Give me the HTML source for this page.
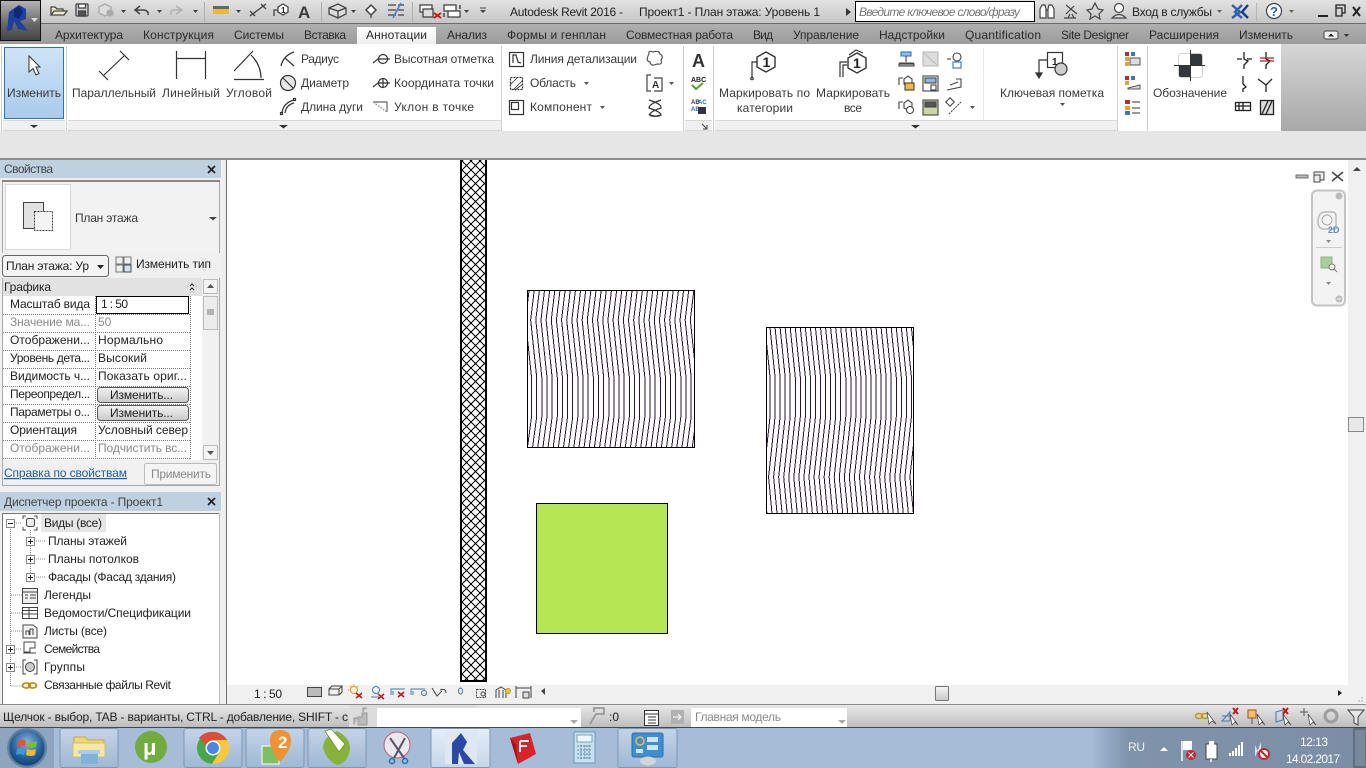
<!DOCTYPE html>
<html lang="ru"><head><meta charset="utf-8"><title>Autodesk Revit 2016</title>
<style>
html,body{margin:0;padding:0;width:1366px;height:768px;overflow:hidden;background:#e6e6e6}
svg{display:block;position:absolute;left:0;top:0}
text{font-family:"Liberation Sans","Noto Sans CJK JP",sans-serif;font-size:12px;fill:#222}
.g{fill:#8a8a8a}.t{fill:#2a2a2a}.s{fill:#3a3a3a}
</style></head><body>
<svg width="1366" height="768" viewBox="0 0 1366 768" xmlns="http://www.w3.org/2000/svg">
<defs>
<linearGradient id="tb" x1="0" y1="0" x2="0" y2="1"><stop offset="0" stop-color="#e2e2e2"/><stop offset="1" stop-color="#c6c6c6"/></linearGradient>
<linearGradient id="tab" x1="0" y1="0" x2="0" y2="1"><stop offset="0" stop-color="#b0b0b0"/><stop offset="1" stop-color="#9c9c9c"/></linearGradient>
<linearGradient id="atab" x1="0" y1="0" x2="0" y2="1"><stop offset="0" stop-color="#fff"/><stop offset="1" stop-color="#eee"/></linearGradient>
<linearGradient id="sel" x1="0" y1="0" x2="0" y2="1"><stop offset="0" stop-color="#cfe3f5"/><stop offset="1" stop-color="#a9cbec"/></linearGradient>
<linearGradient id="rb" x1="0" y1="0" x2="0" y2="1"><stop offset="0" stop-color="#b5b5b5"/><stop offset=".6" stop-color="#666"/><stop offset="1" stop-color="#444"/></linearGradient>
<linearGradient id="fill" x1="0" y1="0" x2="0" y2="1"><stop offset="0" stop-color="#d6d6d6"/><stop offset="1" stop-color="#a8a8a8"/></linearGradient>
<linearGradient id="st" x1="0" y1="0" x2="0" y2="1"><stop offset="0" stop-color="#e8e8e8"/><stop offset="1" stop-color="#bdbdbd"/></linearGradient>
<linearGradient id="btn" x1="0" y1="0" x2="0" y2="1"><stop offset="0" stop-color="#f4f4f4"/><stop offset="1" stop-color="#c8c8c8"/></linearGradient>
<linearGradient id="tray" x1="0" y1="0" x2="1" y2="0"><stop offset="0" stop-color="#a6bdd8"/><stop offset=".14" stop-color="#7f93ab"/><stop offset="1" stop-color="#7b8ea6"/></linearGradient>
<linearGradient id="tbtn" x1="0" y1="0" x2="0" y2="1"><stop offset="0" stop-color="#c3d4e7"/><stop offset="1" stop-color="#9fb8d4"/></linearGradient>
<linearGradient id="tact" x1="0" y1="0" x2="0" y2="1"><stop offset="0" stop-color="#e6eef7"/><stop offset="1" stop-color="#c5d6e9"/></linearGradient>
<radialGradient id="orb" cx=".5" cy=".35" r=".7"><stop offset="0" stop-color="#8ab6e2"/><stop offset=".6" stop-color="#23609c"/><stop offset="1" stop-color="#0f3a68"/></radialGradient>
<pattern id="hatch" patternUnits="userSpaceOnUse" width="9" height="9" x="462" y="161"><path d="M0 0L9 9M9 0L0 9" stroke="#000" stroke-width="1" fill="none" shape-rendering="crispEdges"/></pattern>
<clipPath id="c1"><rect x="528" y="291" width="166" height="156"/></clipPath>
<clipPath id="c2"><rect x="767" y="328" width="146" height="185"/></clipPath>
<path id="l1" d="M0 291L-3.500 320L2.500 377L2.500 417L-1.500 447" fill="none" stroke="#2a1230" stroke-width="1" shape-rendering="crispEdges"/>
<path id="l2" d="M0 328L5 377L5 417L-1.500 477L2 514" fill="none" stroke="#2a1230" stroke-width="1" shape-rendering="crispEdges"/>
</defs>

<!-- base -->
<rect width="1366" height="768" fill="#e9e9e9"/>
<!-- title bar -->
<rect width="1366" height="23" fill="url(#tb)"/>
<rect y="23" width="1366" height="1" fill="#6b6b6b"/>
<rect y="24" width="1366" height="20" fill="url(#tab)"/>
<rect x="357" y="27" width="79" height="18" fill="url(#atab)"/>
<!-- ribbon -->
<rect y="44" width="1366" height="87" fill="#fff"/>
<rect x="1281" y="44" width="85" height="87" fill="url(#fill)"/>
<rect y="131" width="1366" height="27" fill="#e6e6e6"/>
<rect y="158" width="1366" height="2" fill="#8e8e8e"/>
<rect x="3" y="120" width="62" height="10" fill="#f0f0f0"/><rect x="68" y="121" width="433" height="9" fill="#f0f0f0"/>
<rect x="685" y="121" width="27" height="9" fill="#f0f0f0"/><rect x="715" y="121" width="402" height="9" fill="#f0f0f0"/>
<path d="M3 120.500H65M68 120.500H501M685 120.500H712M715 120.500H1117" stroke="#d8d8d8"/>
<path d="M3 130.500H65M68 130.500H501M685 130.500H712M715 130.500H1117" stroke="#d8d8d8"/>
<path d="M66.500 46V131M501.500 46V131M683.500 46V131M713.500 46V131M1117.500 46V131M1147.500 46V131M1.500 46V131" stroke="#cfcfcf"/>
<path d="M983.500 48V120" stroke="#e8e8e8"/>
<rect x="4.500" y="47.500" width="59" height="71" fill="url(#sel)" stroke="#2f73ad"/>
<path d="M29 56V72L33 68.500L36 75L39 73.500L36 67H40Z" fill="#fff" stroke="#333"/>
<path d="M30 125L34 128L38 125ZM279 125L283.500 128.500L288 125ZM911 125L915.500 128.500L920 125Z" fill="#333"/>
<path d="M702 124L707 129M707 125V129H703" stroke="#444" fill="none"/>

<!-- R button -->
<rect x=".5" y=".5" width="40" height="40" fill="url(#rb)" stroke="#111"/>
<path d="M9 12L19 5L26 9L26 19L20 21L28 31L18 29L14 21L12 30L7 31Z" fill="#1f3f9c"/>
<path d="M14 9L19 6L23 12L19 19L14 17Z" fill="#0f2a75"/>
<path d="M31 18L38 18L34.500 22Z" fill="#ddd"/>

<!-- QAT -->
<g fill="none" stroke="#444" stroke-width="1.300">
<path d="M51 15V7H55L57 9H63V11M51 15L54 11H67L64 15Z" fill="#f2e9c8"/>
<rect x="76" y="4" width="12" height="12" rx="1" fill="#d0d5db"/><rect x="78.500" y="4" width="7" height="4" fill="#fff"/><rect x="78.500" y="11" width="7" height="5" fill="#555"/>
<path d="M99 7L105 4L111 7V13L105 16L99 13Z" stroke="#aaa" fill="#ddd"/><circle cx="110" cy="13" r="3" fill="#aaa" stroke="#aaa"/>
<path d="M140 6L135 10L140 14M135 10H144Q149 11 148 15" stroke-width="1.500"/>
<path d="M176 6L182 10L176 14M181 10H173Q170 11 171 15" stroke="#b0b0b0" stroke-width="1.500"/>
<path d="M250 16L266 4M250 11L255 16M261 4L266 9" stroke-width="1.300"/>
<path d="M274 16V10H279" /><path d="M283 4L288 7V12L283 15L278 12V7Z" fill="#fff"/>
<path d="M329 8L338 4L346 8V14L338 18L329 14Z" fill="#ddd"/><path d="M329 8L338 11L346 8M338 11V18"/>
<path d="M366 10L371 5L376 10L371 15Z" fill="#fff" stroke-width="1.500"/><path d="M371 15V18"/>
<path d="M388 5H396M388 10H396M388 15H396M398 5H404M398 10H404M398 15H404"/><path d="M393 18L401 3" stroke="#3c7fd0" stroke-width="1.500"/>
<rect x="420" y="5" width="12" height="7" fill="#fff"/><rect x="423" y="9" width="10" height="8" fill="#ddd"/>
<rect x="444" y="5" width="12" height="6" fill="#fff"/><rect x="448" y="11" width="12" height="6" fill="#fff"/><path d="M460 5V9M444 13V17" stroke="#333"/>
</g>
<path d="M434 13L441 18M441 13L434 18" stroke="#c11" stroke-width="1.800"/>
<rect x="213" y="6" width="16" height="3" fill="#666"/><rect x="213" y="9" width="16" height="5" fill="#e9b93f"/>
<text x="298" y="18" style="font-size:17px;font-weight:bold;fill:#3c3c3c">A</text>
<text x="281" y="13" style="font-size:8px;font-weight:bold">1</text>
<path d="M121 10H126L123.500 13ZM157 10H162L159.500 13ZM193 10H198L195.500 13ZM236 10H241L238.500 13ZM351 10H356L353.500 13ZM464 10H469L466.500 13ZM480 10H486L483 13Z" fill="#444"/>
<path d="M480 8H486" stroke="#444"/>
<path d="M204.500 2V22M321.500 2V22M412.500 2V22" stroke="#b0b0b0"/>

<!-- title text -->
<text x="510" y="16" textLength="113">Autodesk Revit 2016 -</text>
<text x="639" y="16" textLength="181">Проект1 - План этажа: Уровень 1</text>
<path d="M846 8L851 12L846 16Z" fill="#333"/>
<rect x="855.500" y="1.500" width="179" height="20" fill="#fff" stroke="#000"/>
<text x="859" y="16" textLength="161" style="font-style:italic;fill:#777">Введите ключевое слово/фразу</text>
<g fill="none" stroke="#444" stroke-width="1.200">
<path d="M1040 18V9L1042 5H1045L1046 9V18ZM1048 18V9L1049 5H1052L1054 9V18ZM1046 10H1048" fill="#fff"/>
<path d="M1066 5L1077 14M1066 14L1074 6M1064 18H1076M1070 14L1068 18M1072 14L1074 18"/>
<path d="M1095 3L1098 9L1103 10L1099 14L1100 19L1095 16L1090 19L1091 14L1087 10L1092 9Z"/>
<circle cx="1119" cy="8" r="4.500" fill="#fff"/><path d="M1112 18Q1119 11 1126 18Z" fill="#dde"/>
</g>
<text x="1132" y="16" textLength="80">Вход в службы</text>
<path d="M1217 10H1222L1219.500 13ZM1289 10H1294L1291.500 13Z" fill="#666"/>
<path d="M1232 5L1240 12L1232 18M1242 5L1235 12L1242 18" stroke="#2c5fb0" stroke-width="2.400" fill="none"/><path d="M1248 5L1242 12L1248 18" stroke="#123a88" stroke-width="2.400" fill="none"/>
<path d="M1256.500 3V21" stroke="#b5b5b5"/>
<circle cx="1274" cy="11" r="7.500" fill="#fff" stroke="#345" stroke-width="1.200"/>
<text x="1270" y="16" style="font-size:13px;font-weight:bold;fill:#2a5fae">?</text>
<rect x="1318" y="15" width="10" height="2" fill="#222"/>
<path d="M1336 8V5H1345V13H1342M1336 8H1342V16H1336Z" fill="none" stroke="#222" stroke-width="1.300"/>
<path d="M1353 7L1360 16M1360 7L1353 16" stroke="#222" stroke-width="2"/>

<!-- tabs -->
<text x="55" y="39" textLength="68" class="t">Архитектура</text>
<text x="143" y="39" textLength="71" class="t">Конструкция</text>
<text x="234" y="39" textLength="50" class="t">Системы</text>
<text x="304" y="39" textLength="42" class="t">Вставка</text>
<text x="366" y="39" textLength="61" class="t">Аннотации</text>
<text x="447" y="39" textLength="40" class="t">Анализ</text>
<text x="507" y="39" textLength="99" class="t">Формы и генплан</text>
<text x="626" y="39" textLength="107" class="t">Совместная работа</text>
<text x="753" y="39" textLength="20" class="t">Вид</text>
<text x="793" y="39" textLength="66" class="t">Управление</text>
<text x="879" y="39" textLength="66" class="t">Надстройки</text>
<text x="965" y="39" textLength="76" class="t">Quantification</text>
<text x="1061" y="39" textLength="68" class="t">Site Designer</text>
<text x="1149" y="39" textLength="70" class="t">Расширения</text>
<text x="1239" y="39" textLength="54" class="t">Изменить</text>
<rect x="1324" y="31" width="14" height="8" rx="2" fill="#eee" stroke="#444"/><path d="M1328 36.500L1331 33.500L1334 36.500Z" fill="#222"/><path d="M1344 34H1349L1346.500 37Z" fill="#333"/>

<!-- ribbon labels -->
<text x="7" y="97" textLength="54" class="s">Изменить</text>
<text x="72" y="97" textLength="84" class="s">Параллельный</text>
<text x="162" y="97" textLength="58" class="s">Линейный</text>
<text x="226" y="97" textLength="46" class="s">Угловой</text>
<text x="301" y="63" textLength="38" class="s">Радиус</text>
<text x="301" y="87" textLength="48" class="s">Диаметр</text>
<text x="301" y="111" textLength="62" class="s">Длина дуги</text>
<text x="394" y="63" textLength="100" class="s">Высотная отметка</text>
<text x="394" y="87" textLength="100" class="s">Координата точки</text>
<text x="394" y="111" textLength="80" class="s">Уклон  в точке</text>
<text x="530" y="63" textLength="107" class="s">Линия детализации</text>
<text x="530" y="87" textLength="46" class="s">Область</text>
<text x="530" y="111" textLength="62" class="s">Компонент</text>
<text x="719" y="97" textLength="91" class="s">Маркировать по</text>
<text x="737" y="112" textLength="56" class="s">категории</text>
<text x="816" y="97" textLength="74" class="s">Маркировать</text>
<text x="844" y="112" textLength="18" class="s">все</text>
<text x="1000" y="97" textLength="104" class="s">Ключевая пометка</text>
<text x="1153" y="97" textLength="74" class="s">Обозначение</text>
<path d="M584 82H589L586.500 85ZM600 106H605L602.500 109ZM669 82H674L671.500 85ZM970 106H975L972.500 109ZM1060 103H1065L1062.500 106Z" fill="#555"/>

<!-- ribbon icons -->
<g fill="none" stroke="#333" stroke-width="1.200">
<path d="M99 71L108 80M120 51L129 60M104 75L124 56"/>
<path d="M176.500 51V79M205.500 51V79M177 58.500H205"/>
<path d="M234 71L253 51M234 79.500H264M251 55Q261 65 261 78"/>
<path d="M281 66Q283 56 294 52M285 58L294 66"/>
<circle cx="288" cy="83" r="7.500" fill="#e8e8e8"/><path d="M283 78L293 88"/>
<path d="M282 113Q283 103 294 100M285 113Q286 105 294 103"/><rect x="280.500" y="112.500" width="2" height="2"/><rect x="293.500" y="98.500" width="2" height="2"/>
<path d="M373 63L378 59H390"/><circle cx="383" cy="59" r="4.500"/>
<path d="M373 87L378 83H390"/><circle cx="383" cy="83" r="4.500"/><path d="M383 78V88"/>
<path d="M373 102H387V112" stroke="#666"/><path d="M373 102L387 112" stroke="#999" stroke-dasharray="2 1"/>
<rect x="509.500" y="52.500" width="14" height="14"/><path d="M513 63V55H516L518 62L521 63"/>
<rect x="510.500" y="77.500" width="12" height="12" stroke-dasharray="2 1"/><path d="M510 85L517 78M513 90L523 80M515 90L523 84" stroke-width=".8"/>
<rect x="509.500" y="100.500" width="14" height="14"/><rect x="511.500" y="102.500" width="7" height="7"/>
<path d="M649 54Q648 50 653 52Q659 50 660 54Q664 56 661 60Q663 65 657 64Q651 67 650 62Q645 61 649 54Z" stroke="#555"/>
<path d="M651 75H647V91H651M654 78H662V91H654" stroke="#444"/>
<path d="M649 100Q662 104 661 108Q649 112 650 115Q660 118 661 114M661 100Q649 104 649 108Q661 112 661 115Q651 118 649 114"/>
<path d="M752 78V62H759"/><circle cx="752" cy="78.500" r="1.200"/>
<path d="M766 52L775 57V67L766 72L757 67V57Z" fill="#fff" stroke-width="1.400"/>
<path d="M840 77V62H847M843 77V65H847"/><path d="M857 53L866 58V68L857 73L848 68V58Z" fill="#fff" stroke-width="1.400"/><path d="M849 55L856 50L863 53"/>
<path d="M1039 75V60H1047"/><path d="M1036 73L1039 78L1042 73Z" fill="#333"/><rect x="1047.500" y="52.500" width="15" height="15" fill="#fff"/><circle cx="1061" cy="69" r="6" fill="#ccc"/>
</g>
<text x="762.500" y="67" style="font-size:14px;font-weight:bold;fill:#222">1</text>
<text x="853" y="68" style="font-size:14px;font-weight:bold;fill:#222">1</text>
<text x="1052" y="65" style="font-size:10px;font-weight:bold;fill:#222">1</text>
<text x="652" y="88" style="font-size:10px;font-weight:bold;fill:#333">A</text>
<text x="692" y="67" style="font-size:18px;font-weight:bold;fill:#333">A</text>
<text x="691" y="82" style="font-size:7px;font-weight:bold;fill:#222">ABC</text>
<path d="M692 85L696 89L703 83" stroke="#5a9e2f" stroke-width="2" fill="none"/>
<text x="691" y="104" style="font-size:6px;font-weight:bold;fill:#333">AB</text>
<text x="698" y="104" style="font-size:6px;font-weight:bold;fill:#2a6fb5">AC</text>
<text x="691" y="111" style="font-size:6px;font-weight:bold;fill:#2a6fb5">AB</text>
<rect x="698" y="107" width="8" height="7" fill="#334"/>

<!-- small annotate icons -->
<g fill="none" stroke="#444" stroke-width="1.100">
<rect x="901" y="52" width="10" height="4" fill="#8cc0ea" stroke="#2b78b9"/><path d="M906 56V62M899 63H914"/><rect x="899" y="64" width="15" height="2" fill="#ccc"/>
<rect x="923" y="52" width="15" height="14" fill="#ddd" stroke="#bbb"/><path d="M924 53L937 65" stroke="#bbb"/>
<path d="M947 59H951"/><circle cx="957" cy="57" r="4"/><rect x="953" y="62" width="8" height="6" stroke="#2b78b9"/>
<path d="M899 85V78H903"/><path d="M908 76L912 79V84L908 86L904 84V79Z"/><rect x="905" y="83" width="9" height="7" fill="#f0b840"/>
<rect x="923" y="76" width="15" height="15" fill="#fff"/><rect x="925" y="78" width="11" height="5" fill="#8db8d8"/><rect x="931" y="85" width="5" height="5"/>
<path d="M947 90L961 87V79H956M950 85L958 82"/>
<path d="M899 109V102H903"/><path d="M908 100L912 103V108L908 110L904 108V103Z"/><circle cx="910" cy="110" r="3.500" fill="#fff"/>
<rect x="923" y="100" width="15" height="15" fill="#c9d6a8"/><rect x="925" y="102" width="11" height="5" fill="#555"/>
<path d="M949 114L961 102" stroke-dasharray="2 1"/><rect x="947" y="99" width="6" height="6" transform="rotate(45 950 102)"/>
</g>
<!-- right group -->
<rect x="1125" y="52" width="4" height="4" fill="#a33"/><rect x="1125" y="57" width="4" height="4" fill="#e2a23a"/><rect x="1125" y="62" width="4" height="4" fill="#e2a23a"/><rect x="1131" y="52" width="4" height="4" fill="#3a78b8"/>
<rect x="1130" y="58" width="10" height="7" fill="#ddd" stroke="#555"/>
<rect x="1125" y="76" width="4" height="4" fill="#a33"/><rect x="1125" y="81" width="4" height="4" fill="#e2a23a"/><rect x="1131" y="76" width="4" height="4" fill="#3a78b8"/><path d="M1128 88L1140 85V89H1128Z" fill="#ddd" stroke="#555"/>
<rect x="1125" y="100" width="5" height="4" fill="#a33"/><rect x="1125" y="106" width="5" height="4" fill="#e2a23a"/><rect x="1125" y="111" width="5" height="4" fill="#3a78b8"/>
<path d="M1132 102H1140M1132 108H1140M1132 113H1140" stroke="#333"/>
<rect x="1178.500" y="53.500" width="24" height="24" rx="3" fill="#fff" stroke="#d0d0d0"/>
<path d="M1190 54H1200Q1202 54 1202 56V65H1190Z" fill="#33363b"/><path d="M1179 66H1190V77H1181Q1179 77 1179 75Z" fill="#33363b"/>
<path d="M1190.500 50V81M1174 65.500H1205" stroke="#333"/>
<g fill="none" stroke="#222" stroke-width="1.300">
<path d="M1244 52V59L1248 61L1244 65V69M1237 59H1242M1247 59H1252"/>
<path d="M1243 76V84L1246 87L1243 89V92"/>
<path d="M1266 52V59L1270 61L1266 65V69"/>
<path d="M1266 92V85L1262 82M1266 85L1272 79M1258 79L1262 82"/>
<rect x="1235.500" y="102.500" width="15" height="8"/><path d="M1239 103V110M1243 103V110M1236 106H1250"/>
<rect x="1260.500" y="100.500" width="13" height="14" fill="#ddd"/><path d="M1262 114L1268 101M1266 114L1272 101"/>
</g>
<path d="M1260 58H1274M1260 61H1274" stroke="#a22" stroke-width="1.200"/>

<!-- left panels background -->
<rect y="160" width="226" height="544" fill="#efefef"/>
<rect x="226" y="160" width="1" height="544" fill="#6f6f6f"/>
<rect y="160" width="221" height="18" fill="#bfd0e0"/>
<text x="4" y="173" textLength="49" style="fill:#444">Свойства</text>
<path d="M208 166L215 173M215 166L208 173" stroke="#222" stroke-width="1.800"/>
<rect x="2.500" y="180.500" width="217" height="305" fill="#fff" stroke="#aaa"/>
<rect x="2" y="180" width="218" height="2" fill="#888"/>
<rect x="3" y="182" width="216" height="71" fill="#f2f2f2"/>
<rect x="5.500" y="184.500" width="65" height="65" fill="#fff" stroke="#d8d8d8"/>
<rect x="23.500" y="202.500" width="20" height="26" fill="#e2e2e2" stroke="#444"/>
<rect x="34.500" y="211.500" width="18" height="19" fill="#f4f4f4" stroke="#444" stroke-dasharray="2 1"/>
<text x="75" y="222" textLength="63" class="s">План этажа</text>
<path d="M209 217H217L213 220.500Z" fill="#444"/>
<rect x="2" y="253" width="218" height="25" fill="#f0f0f0"/>
<rect x="2.500" y="255.500" width="106" height="21" rx="3" fill="#f4f4f4" stroke="#666"/>
<text x="6" y="270" textLength="83">План этажа: Ур</text>
<path d="M97 265H104L100.500 269Z" fill="#222"/>
<rect x="116" y="257" width="7" height="7" fill="none" stroke="#777"/><rect x="124" y="257" width="7" height="7" fill="none" stroke="#777"/><rect x="116" y="265" width="7" height="7" fill="none" stroke="#777"/><rect x="124" y="265" width="7" height="7" fill="#dde" stroke="#355"/>
<text x="136" y="268" textLength="75">Изменить тип</text>
<rect x="3" y="278" width="199" height="18" fill="#e2e2e2"/>
<text x="4" y="291" textLength="47">Графика</text>
<path d="M190 286L192 284L194 286M190 290L192 288L194 290" stroke="#222" fill="none"/>
<rect x="3" y="296" width="199" height="164" fill="#fff"/>
<rect x="202" y="278" width="17" height="182" fill="#f1f1f1"/>
<path d="M3 314.500H190M3 332.500H190M3 350.500H190M3 368.500H190M3 386.500H190M3 404.500H190M3 422.500H190M3 440.500H190M3 458.500H190M95.500 296V459M190.500 296V459" stroke="#777" stroke-dasharray="1 1"/>
<text x="10" y="308" textLength="80">Масштаб вида</text>
<rect x="96.500" y="296.500" width="92" height="17" fill="#fff" stroke="#000"/>
<text x="101" y="308" textLength="27">1 : 50</text>
<text x="10" y="326" textLength="80" class="g">Значение ма...</text><text x="98" y="326" class="g">50</text>
<text x="10" y="344" textLength="80">Отображени...</text><text x="98" y="344" textLength="65">Нормально</text>
<text x="10" y="362" textLength="80">Уровень дета...</text><text x="98" y="362" textLength="49">Высокий</text>
<text x="10" y="380" textLength="80">Видимость ч...</text><text x="98" y="380" textLength="89">Показать ориг...</text>
<text x="10" y="398" textLength="80">Переопредел...</text>
<rect x="97.500" y="387.500" width="91" height="15" rx="3" fill="url(#btn)" stroke="#555"/><text x="110" y="399" textLength="63">Изменить...</text>
<text x="10" y="416" textLength="80">Параметры о...</text>
<rect x="97.500" y="405.500" width="91" height="15" rx="3" fill="url(#btn)" stroke="#555"/><text x="110" y="417" textLength="63">Изменить...</text>
<text x="10" y="434" textLength="67">Ориентация</text><text x="98" y="434" textLength="90">Условный север</text>
<text x="10" y="452" textLength="80" class="g">Отображени...</text><text x="98" y="452" textLength="89" class="g">Подчистить вс...</text>
<rect x="203.500" y="279.500" width="14" height="14" fill="#f4f4f4" stroke="#bbb"/><path d="M207 288H214L210.500 284Z" fill="#555"/>
<rect x="203.500" y="296.500" width="14" height="33" fill="#ececec" stroke="#bbb"/><path d="M207 310H214M207 312H214M207 314H214" stroke="#777"/>
<rect x="203.500" y="445.500" width="14" height="14" fill="#f4f4f4" stroke="#bbb"/><path d="M207 451H214L210.500 455Z" fill="#555"/>
<rect x="3" y="460" width="216" height="25" fill="#f0f0f0"/>
<text x="4" y="477" textLength="123" style="fill:#1a5ea8;text-decoration:underline">Справка по свойствам</text>
<rect x="144.500" y="463.500" width="72" height="21" rx="2" fill="#f4f4f4" stroke="#bbb"/>
<text x="151" y="478" textLength="60" class="g">Применить</text>

<rect y="492" width="221" height="19" fill="#bfd0e0"/>
<text x="4" y="506" textLength="159" style="fill:#444">Диспетчер проекта - Проект1</text>
<path d="M208 498L215 505M215 498L208 505" stroke="#222" stroke-width="1.800"/>
<rect x="2" y="513" width="218" height="191" fill="#fff"/>
<path d="M2.500 704V513.500H220" fill="none" stroke="#777"/>
<path d="M219.500 513V704" stroke="#bbb"/>
<rect x="41" y="514" width="65" height="18" fill="#e6e6e6"/>
<path d="M10.500 529V686H22M30.500 530V578M14 523H22M34 541H46M34 559H46M34 577H46M11 595H22M11 613H22M11 631H22M14 649H22M14 667H22" stroke="#888" stroke-dasharray="1 1" fill="none"/>
<g fill="#fff" stroke="#888">
<rect x="6.500" y="519.500" width="8" height="8"/><rect x="26.500" y="537.500" width="8" height="8"/><rect x="26.500" y="555.500" width="8" height="8"/><rect x="26.500" y="573.500" width="8" height="8"/><rect x="6.500" y="645.500" width="8" height="8"/><rect x="6.500" y="663.500" width="8" height="8"/>
</g>
<path d="M8 523.500H13M28 541.500H33M30.500 539V544M28 559.500H33M30.500 557V562M28 577.500H33M30.500 575V580M8 649.500H13M10.500 647V652M8 667.500H13M10.500 665V670" stroke="#222"/>
<g fill="none" stroke="#444">
<path d="M23 519V516H26M34 516H37V519M37 527V530H34M26 530H23V527"/><rect x="26.500" y="518.500" width="8" height="8" rx="2" fill="#eee"/>
<rect x="22.500" y="588.500" width="15" height="15" fill="#eee"/><path d="M23 592H37M30 595H36M30 598H36M25 595H28M25 598H28"/>
<rect x="22.500" y="607.500" width="15" height="11" fill="#fff"/><path d="M23 610.500H37M29 608V618M23 614H37"/>
<path d="M23 638V625H33L37 628V638Z" fill="#f6f6f6"/><path d="M26 635V631H29V635M30 635V629H33V635"/>
<path d="M24 652V642H35V648H30V652H24" /><path d="M23 653H36" />
<path d="M26 660H23V674H26M34 660H37V674H34"/><circle cx="30" cy="667" r="4.500" fill="#ccc"/>
</g>
<ellipse cx="26.500" cy="685.500" rx="4" ry="2.500" fill="none" stroke="#c58c12" stroke-width="1.800"/><ellipse cx="32.500" cy="685.500" rx="4" ry="2.500" fill="none" stroke="#c58c12" stroke-width="1.800"/>
<text x="44" y="527" textLength="58">Виды (все)</text>
<text x="48" y="545" textLength="79">Планы этажей</text>
<text x="48" y="563" textLength="91">Планы потолков</text>
<text x="48" y="581" textLength="128">Фасады (Фасад здания)</text>
<text x="44" y="599" textLength="47">Легенды</text>
<text x="44" y="617" textLength="147">Ведомости/Спецификации</text>
<text x="44" y="635" textLength="63">Листы (все)</text>
<text x="44" y="653" textLength="56">Семейства</text>
<text x="44" y="671" textLength="41">Группы</text>
<text x="44" y="689" textLength="127">Связанные файлы Revit</text>

<!-- canvas -->
<rect x="227" y="160" width="1139" height="525" fill="#fff"/>
<rect x="1348" y="160" width="18" height="544" fill="#f0f0f0"/>
<path d="M1353 171L1357 167L1361 171Z" fill="#444"/>
<rect x="1348.500" y="417.500" width="15" height="14" fill="#e8e8e8" stroke="#888"/>

<!-- drawing -->
<rect x="462" y="160" width="24" height="521" fill="url(#hatch)"/>
<path d="M461 160V681H486V160" fill="none" stroke="#000" stroke-width="2"/>
<g clip-path="url(#c1)">
<use href="#l1" x="529"/><use href="#l1" x="534.15"/><use href="#l1" x="539.3"/><use href="#l1" x="544.45"/><use href="#l1" x="549.6"/><use href="#l1" x="554.75"/><use href="#l1" x="559.9"/><use href="#l1" x="565.05"/><use href="#l1" x="570.2"/><use href="#l1" x="575.35"/><use href="#l1" x="580.5"/><use href="#l1" x="585.65"/><use href="#l1" x="590.8"/><use href="#l1" x="595.95"/><use href="#l1" x="601.1"/><use href="#l1" x="606.25"/><use href="#l1" x="611.4"/><use href="#l1" x="616.55"/><use href="#l1" x="621.7"/><use href="#l1" x="626.85"/><use href="#l1" x="632"/><use href="#l1" x="637.15"/><use href="#l1" x="642.3"/><use href="#l1" x="647.45"/><use href="#l1" x="652.6"/><use href="#l1" x="657.75"/><use href="#l1" x="662.9"/><use href="#l1" x="668.05"/><use href="#l1" x="673.2"/><use href="#l1" x="678.35"/><use href="#l1" x="683.5"/><use href="#l1" x="688.65"/><use href="#l1" x="693.8"/><use href="#l1" x="698.95"/>
</g>
<rect x="527.500" y="290.500" width="167" height="157" fill="none" stroke="#000"/>
<g clip-path="url(#c2)">
<use href="#l2" x="765"/><use href="#l2" x="770.05"/><use href="#l2" x="775.1"/><use href="#l2" x="780.15"/><use href="#l2" x="785.2"/><use href="#l2" x="790.25"/><use href="#l2" x="795.3"/><use href="#l2" x="800.35"/><use href="#l2" x="805.4"/><use href="#l2" x="810.45"/><use href="#l2" x="815.5"/><use href="#l2" x="820.55"/><use href="#l2" x="825.6"/><use href="#l2" x="830.65"/><use href="#l2" x="835.7"/><use href="#l2" x="840.75"/><use href="#l2" x="845.8"/><use href="#l2" x="850.85"/><use href="#l2" x="855.9"/><use href="#l2" x="860.95"/><use href="#l2" x="866"/><use href="#l2" x="871.05"/><use href="#l2" x="876.1"/><use href="#l2" x="881.15"/><use href="#l2" x="886.2"/><use href="#l2" x="891.25"/><use href="#l2" x="896.3"/><use href="#l2" x="901.35"/><use href="#l2" x="906.4"/><use href="#l2" x="911.45"/><use href="#l2" x="916.5"/>
</g>
<rect x="766.500" y="327.500" width="147" height="186" fill="none" stroke="#000"/>
<rect x="536.500" y="503.500" width="131" height="130" fill="#b6e653" stroke="#000"/>

<!-- view controls -->
<rect x="1296" y="175" width="12" height="3" fill="#bbb" stroke="#555" stroke-width=".8"/>
<path d="M1314 172H1324V180H1320M1314 172V175M1314 175H1320V182H1314Z" fill="#eee" stroke="#444"/>
<path d="M1332 172L1343 181M1343 172L1332 181" stroke="#444" stroke-width="1.500"/>
<rect x="1312" y="190.500" width="33" height="115" rx="5" fill="#f3f3f3" stroke="#c4c4c4" stroke-width="2"/>
<circle cx="1339" cy="196" r="3.500" fill="#bbb"/><circle cx="1339" cy="299" r="3.500" fill="#bbb"/>
<path d="M1337 299H1341" stroke="#fff"/>
<path d="M1324 212H1332Q1336 212 1336 216V229H1323Q1318 228 1318 222Q1318 213 1324 212Z" fill="none" stroke="#bbb" stroke-width="1.500"/><circle cx="1327" cy="220" r="5" fill="none" stroke="#aaa"/>
<text x="1328" y="233" style="font-size:9px;font-weight:bold;fill:#5b8fc7">2D</text>
<path d="M1326 240H1331L1328.500 243ZM1326 282H1331L1328.500 285Z" fill="#888"/>
<path d="M1316 247.500H1342" stroke="#ccc"/>
<rect x="1321" y="257" width="11" height="11" fill="#a8cf9b" stroke="#8bb581"/>
<circle cx="1332" cy="267" r="3" fill="#f4f4f4" stroke="#777"/><path d="M1334 269L1337 272" stroke="#777"/>

<rect x="227" y="685" width="1121" height="19" fill="#f0f0f0"/>
<text x="254" y="698" textLength="28">1 : 50</text>
<g fill="none" stroke="#444">
<rect x="307.500" y="687.500" width="14" height="9" fill="#bbb"/>
<path d="M329 695V689L332 686H342V692L339 695ZM329 689H339V695M339 689L342 686"/>
<circle cx="354" cy="690" r="3.500" stroke="#d89a1a"/><path d="M354 684V685.500M348 690H349.500M350 686L351 687M358 686L357 687" stroke="#d89a1a"/>
<circle cx="376" cy="690" r="3.500" stroke="#3b7db5"/><path d="M371 697H379" stroke="#3b7db5"/>
<path d="M391 695V689H405M393 691V695" stroke="#3b7db5"/>
<path d="M411 695V689H425M413 691V695" stroke="#3b7db5"/><circle cx="424" cy="693" r="2.500" stroke="#3b7db5"/>
<path d="M432 688L437 696L442 691M440 690Q446 688 446 693"/>
<ellipse cx="460.500" cy="691" rx="2" ry="3" stroke="#3b7db5"/>
<rect x="476.500" y="689.500" width="9" height="8" stroke-dasharray="2 1"/><circle cx="483" cy="694" r="2"/>
<path d="M496 698V690L501 687L506 690V698M499 698V690M503 698V690"/><circle cx="508" cy="691" r="2.500" fill="#f0c040" stroke="#c90"/>
<path d="M516 686V698M531 686V698M516 688H531"/><rect x="523" y="692" width="6" height="6" fill="#ddd"/>
</g>
<path d="M356 693L362 698M362 693L356 698M378 694L384 699M384 694L378 699M398 692L404 697M404 692L398 697" stroke="#c11" stroke-width="1.500"/>
<path d="M541 691L545 688V695Z" fill="#444"/>
<rect x="935.500" y="686.500" width="13" height="14" rx="1" fill="url(#btn)" stroke="#777"/>
<path d="M1338 690L1342 693L1338 696Z" fill="#222"/>
<path d="M1361 698H1363M1358 701H1360M1361 701H1363" stroke="#aaa"/>

<!-- status bar -->
<rect y="704" width="1366" height="1" fill="#8a8a8a"/>
<rect y="705" width="1366" height="22" fill="url(#st)"/>
<rect y="727" width="1366" height="1" fill="#3b4a5c"/>
<text x="3" y="721" textLength="345">Щелчок - выбор, TAB - варианты, CTRL - добавление, SHIFT - с</text>
<rect x="349" y="705" width="128" height="22" fill="#dcdcdc"/>
<path d="M358 725V717H362V713H367V725ZM354 725V718H358M363 712V708H367" stroke="#9a9a9a" fill="#bbb"/>
<rect x="377" y="708" width="204" height="19" fill="#fff"/>
<path d="M570 720H578L574 724Z" fill="#aaa"/>
<path d="M590 724L596 714H604V708H594V712" fill="none" stroke="#999" stroke-width="1.800"/>
<text x="609" y="721" textLength="10">:0</text>
<rect x="644.500" y="710.500" width="14" height="15" fill="#fff" stroke="#333"/><path d="M645 714H658M648 717H656M648 720H656M648 723H656" stroke="#333"/>
<rect x="671" y="710" width="13" height="14" fill="#b0b0b0"/><path d="M673 717H680M678 714L681 717L678 720" stroke="#fff" fill="none"/>
<rect x="691" y="708" width="156" height="19" fill="#fff"/>
<text x="695" y="721" textLength="86" class="g">Главная модель</text>
<path d="M838 720H846L842 724Z" fill="#aaa"/>
<g fill="none" stroke="#555">
<ellipse cx="1199" cy="716" rx="3.500" ry="2.500" stroke="#c8960f" stroke-width="1.500"/><ellipse cx="1205" cy="716" rx="3.500" ry="2.500" stroke="#c8960f" stroke-width="1.500"/>
<path d="M1222 721L1230 712V721ZM1222 716H1230" stroke="#3b7db5"/>
<rect x="1248" y="710" width="8" height="8" fill="#f3c06a" stroke="#b04a1a"/><path d="M1252 718V724"/>
<path d="M1276 722V712L1283 710V720Z" stroke="#3b7db5"/>
<path d="M1300 712H1308M1304 708V716"/>
<circle cx="1331" cy="716" r="6" stroke="#9d9d9d" stroke-width="3"/>
<path d="M1348 710H1364L1358 717V725L1354 723V717Z" fill="#e8e8e8" stroke="#444"/>
</g>
<path d="M1207 712L1209 724L1212 721L1216 724ZM1230 714L1232 725L1235 722L1238 725ZM1257 714L1259 725L1262 722L1265 725ZM1283 714L1285 725L1288 722L1291 725ZM1308 714L1310 725L1313 722L1316 725Z" fill="#fff" stroke="#444" stroke-width=".7"/>
<path d="M1233 708L1238 714M1238 708L1233 714M1283 708L1288 714M1288 708L1283 714" stroke="#c11" stroke-width="1.800"/>

<!-- taskbar -->
<rect y="728" width="1366" height="40" fill="#a6bdd8"/>
<rect x="1090" y="728" width="276" height="40" fill="url(#tray)"/>
<rect x="1353" y="728" width="13" height="40" fill="#5f6f82"/><rect x="1355" y="730" width="10" height="36" fill="#8a9aae" opacity=".6"/>
<rect x="0" y="728" width="54" height="40" fill="#8ea5c0"/>
<circle cx="27" cy="748" r="20" fill="#64809e"/>
<circle cx="27" cy="748" r="18" fill="url(#orb)" stroke="#5c7a98"/>
<path d="M18 741Q23 738 26 741L25 747Q21 745 17 747Z" fill="#e8542f"/><path d="M28 741Q32 743 37 741L36 747Q32 749 27 747Z" fill="#7dbb3a"/><path d="M17 749Q21 747 25 749L24 755Q20 753 16 755Z" fill="#3c9ad8"/><path d="M27 749Q31 751 36 749L35 755Q31 757 26 755Z" fill="#f1bb2a"/>
<g stroke="#7e96b2">
<rect x="60" y="728.500" width="58" height="39" rx="2" fill="url(#tbtn)"/><rect x="184" y="728.500" width="58" height="39" rx="2" fill="url(#tbtn)"/><rect x="246" y="728.500" width="58" height="39" rx="2" fill="url(#tbtn)"/><rect x="308" y="728.500" width="58" height="39" rx="2" fill="url(#tbtn)"/><rect x="431" y="728.500" width="59" height="39" rx="2" fill="url(#tact)"/><rect x="618" y="728.500" width="59" height="39" rx="2" fill="url(#tbtn)"/>
</g>
<!-- explorer -->
<path d="M74 737H85L88 740H104V746H74Z" fill="#f2d56d" stroke="#c5a94a"/><rect x="73" y="743" width="32" height="14" fill="#f7e8a8" stroke="#d3bd6c"/><rect x="81" y="752" width="17" height="12" fill="#7fb4d8"/><rect x="78" y="750" width="22" height="4" fill="#a9d0e8"/>
<!-- utorrent -->
<circle cx="151" cy="747" r="16" fill="#72ac3f"/><text x="143" y="755" style="font-size:22px;font-weight:bold;fill:#fff">μ</text>
<!-- chrome -->
<circle cx="213" cy="748" r="16" fill="#4aa64a"/>
<path d="M213 732A16 16 0 0 1 227 740H213A8 8 0 0 0 206 745L199 738A16 16 0 0 1 213 732Z" fill="#dd4b3c"/>
<path d="M227 740A16 16 0 0 1 212 764L220 751A8 8 0 0 0 213 740Z" fill="#f6c93d"/>
<circle cx="213" cy="748" r="7.500" fill="#fff"/><circle cx="213" cy="748" r="6" fill="#4b86e3"/>
<!-- 2gis -->
<rect x="262" y="746" width="17" height="18" fill="#7fbf63" stroke="#fff"/>
<path d="M280 730Q291 730 291 741Q291 750 280 762Q270 750 270 741Q270 730 280 730Z" fill="#ef9233"/>
<text x="278" y="748" style="font-size:17px;font-weight:bold;fill:#fff">2</text>
<!-- corel -->
<path d="M337 731Q351 738 350 750Q347 764 337 765Q326 760 323 748Q323 737 337 731Z" fill="#87b33c"/>
<path d="M325 731L339 752L345 744L331 729Z" fill="#fff" stroke="#5d8a24" stroke-width=".7"/>
<!-- snipping -->
<circle cx="397" cy="745" r="13" fill="#e8e8ee" stroke="#cc5566"/>
<path d="M390 738L404 758M405 738L394 758" stroke="#556" stroke-width="2"/><circle cx="392" cy="761" r="2.500" fill="none" stroke="#2a6fb0" stroke-width="1.500"/><circle cx="405" cy="761" r="2.500" fill="none" stroke="#2a6fb0" stroke-width="1.500"/>
<!-- revit -->
<rect x="445" y="731" width="32" height="33" fill="#dfe8f2"/>
<path d="M452 764V743L461 733L467 742L463 750L475 764H464L459 752L458 764Z" fill="#284aa6"/>
<!-- sketchup -->
<path d="M510 738L530 733L536 754L518 764Z" fill="#d9232b"/><path d="M510 738L518 764L516 744Z" fill="#a61018"/>
<path d="M520 741H529M520 741V752M520 746H527" stroke="#fff" stroke-width="2" fill="none"/>
<!-- calc -->
<rect x="574" y="732" width="21" height="31" fill="#c9e0f0" stroke="#6b97b7"/><rect x="577" y="735" width="15" height="7" fill="#eef6fb" stroke="#7aa"/>
<path d="M577 746H592M577 750H592M577 754H592M577 758H592M581 745V760M585 745V760M589 745V760" stroke="#5c87a7" stroke-dasharray="2 1"/>
<!-- control panel -->
<rect x="632" y="733" width="31" height="24" rx="2" fill="#3f8ed0" stroke="#2a6fa8"/><circle cx="640" cy="741" r="4" fill="none" stroke="#f2b84a" stroke-width="1.500"/><rect x="647" y="737" width="11" height="5" fill="#cfe6f8"/><rect x="647" y="745" width="11" height="5" fill="#cfe6f8"/><rect x="636" y="749" width="7" height="4" fill="#cfe6f8"/>
<ellipse cx="648" cy="761" rx="8" ry="4.500" fill="#d5d5d5"/>
<!-- tray -->
<text x="1128" y="751" textLength="17" style="fill:#eef3f8">RU</text>
<path d="M1160 751H1168L1164 747Z" fill="#fff"/>
<path d="M1182 741V761" stroke="#fff" stroke-width="1.500"/><path d="M1183 741H1192V750H1183Z" fill="#fff"/><circle cx="1191" cy="755" r="5" fill="#c9252b"/><path d="M1188.500 752.500L1193.500 757.500M1193.500 752.500L1188.500 757.500" stroke="#fff"/>
<rect x="1206" y="744" width="11" height="15" fill="#fff" stroke="#444"/><rect x="1209" y="741" width="5" height="4" fill="#fff"/><path d="M1211 759V762" stroke="#fff" stroke-width="1.500"/>
<path d="M1230 753V756M1233 751V756M1236 748V756M1239 745V756M1242 742V756" stroke="#fff" stroke-width="2"/>
<path d="M1255 745V757L1261 742V759Z" fill="#dde4ec"/><circle cx="1264" cy="754" r="5" fill="#fff" stroke="#c9252b" stroke-width="2"/><path d="M1261 751L1267 757" stroke="#c9252b" stroke-width="2"/>
<text x="1300" y="746" textLength="28" style="fill:#fff">12:13</text>
<text x="1286" y="763" textLength="54" style="fill:#fff">14.02.2017</text>
</svg>
</body></html>
